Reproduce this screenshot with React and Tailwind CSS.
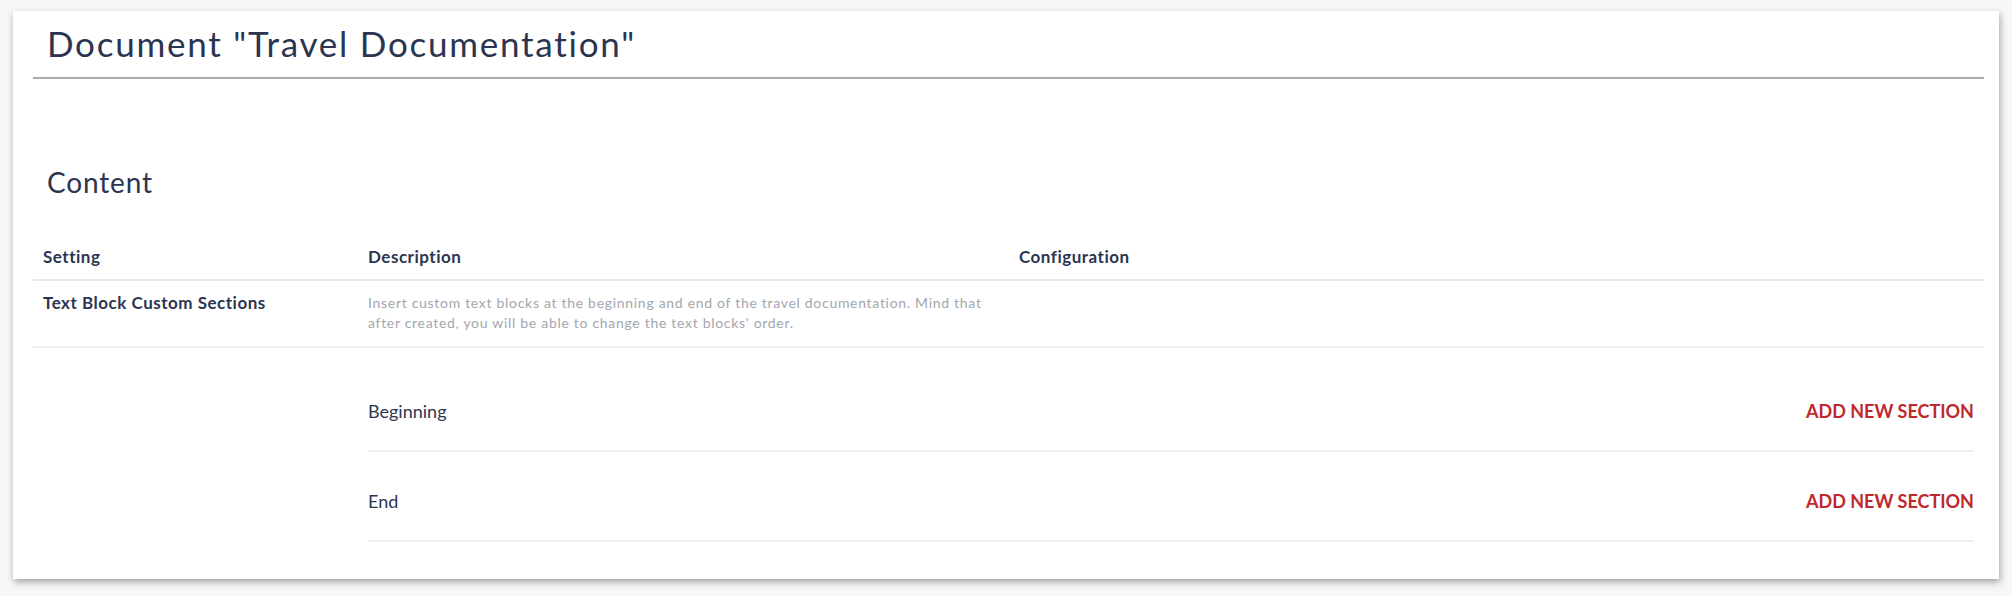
const font = { fontFamily: "Lato, 'Noto Sans', sans-serif" }

const sections = ["Beginning", "End"]

export default function App() {
  return (
    <div className="min-h-screen bg-[#f7f7f7] pt-[11px] pl-[13px]" style={font}>
      <div className="w-[1986px] h-[568px] bg-white shadow-[1px_3px_7px_rgba(0,0,0,0.35)] pl-[20px] pr-[15px]">
        <h1 className="pt-[12px] pb-[14px] pl-[14px] text-[35px] leading-[40px] tracking-[0.05em] text-[#2b3551] border-b-2 border-[#a9acb1]">
          Document "Travel Documentation"
        </h1>

        <h2 className="mt-[86px] pl-[14px] text-[28px] leading-[34px] tracking-[0.03em] text-[#2b3551]">Content</h2>

        <div className="mt-[48px] grid grid-cols-[325px_651px_1fr] pb-[12px] border-b-2 border-[#e8e8e8] text-[17px] leading-[20px] tracking-[0.03em] font-bold text-[#2b3551]">
          <div className="px-[10px]">Setting</div>
          <div className="px-[10px]">Description</div>
          <div className="px-[10px]">Configuration</div>
        </div>

        <div className="grid grid-cols-[325px_651px_1fr] pt-[12px] pb-[13px] border-b-2 border-[#efefef]">
          <div className="px-[10px] text-[17px] leading-[20px] tracking-[0.03em] font-bold text-[#2b3551]">Text Block Custom Sections</div>
          <div className="px-[10px] text-[14px] leading-[20px] tracking-[0.05em] text-[#a3a6ad]">
            <p className="max-w-[625px]">
              Insert custom text blocks at the beginning and end of the travel documentation. Mind that after created, you will be able to change the text blocks' order.
            </p>
          </div>
          <div />
        </div>

        <div className="pt-[14px] pl-[335px] pr-[10px]">
          {sections.map((s) => (
            <div key={s} className="flex items-center justify-between pt-[37px] pb-[27px] border-b-2 border-[#efefef] text-[18px] leading-[24px]">
              <span className="text-[#2d3650]">{s}</span>
              <button className="font-bold text-[#c0282d] uppercase">Add new section</button>
            </div>
          ))}
        </div>
      </div>
    </div>
  )
}
